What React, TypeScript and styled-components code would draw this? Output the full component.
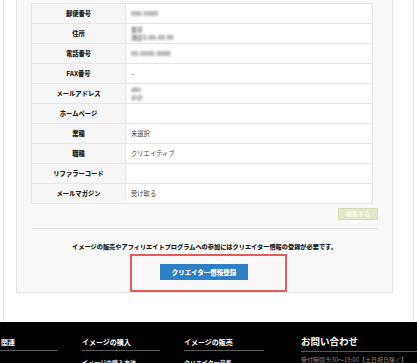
import { FC } from "react";
import styled, { createGlobalStyle } from "styled-components";

const GlobalStyle = createGlobalStyle`
  html, body {
    margin: 0;
    padding: 0;
    background: #fff;
  }
  body {
    font-family: "Noto Sans CJK JP", "Noto Sans", sans-serif;
    color: #333;
  }
`;

type Row = { label: string; value?: string; blur?: string[] };

const rows: Row[] = [
  { label: "郵便番号", blur: ["000-0000"] },
  { label: "住所", blur: ["東京", "港区0-00-00 00"] },
  { label: "電話番号", blur: ["00-0000-0000"] },
  { label: "FAX番号", value: "–" },
  { label: "メールアドレス", blur: ["abc", "@@"] },
  { label: "ホームページ" },
  { label: "業種", value: "未選択" },
  { label: "職種", value: "クリエイティブ" },
  { label: "リファラーコード" },
  { label: "メールマガジン", value: "受け取る" },
];

const App: FC = () => {
  return (
    <Page>
      <GlobalStyle />
      <Frame>
        <Panel>
          <InfoTable>
            <tbody>
              {rows.map((r) => (
                <tr key={r.label}>
                  <LabelCell>{r.label}</LabelCell>
                  <ValueCell>
                    {r.blur ? (
                      <Blurred>
                        {r.blur.map((b, i) => (
                          <span key={i}>{b}</span>
                        ))}
                      </Blurred>
                    ) : (
                      r.value
                    )}
                  </ValueCell>
                </tr>
              ))}
            </tbody>
          </InfoTable>
          <EditRow>
            <EditButton>編集する</EditButton>
          </EditRow>
          <Divider />
          <Notice>
            イメージの販売やアフィリエイトプログラムへの参加にはクリエイター情報の登録が必要です。
          </Notice>
          <ButtonRow>
            <Highlight>
              <RegisterButton>クリエイター情報登録</RegisterButton>
            </Highlight>
          </ButtonRow>
        </Panel>
      </Frame>
      <Footer>
        <FooterCol $width={78}>
          <FooterHead>サイト関連</FooterHead>
        </FooterCol>
        <FooterCol $width={78}>
          <FooterHead>イメージの購入</FooterHead>
          <FooterItem>イメージの購入方法</FooterItem>
        </FooterCol>
        <FooterCol $width={80}>
          <FooterHead>イメージの販売</FooterHead>
          <FooterItem>クリエイター募集</FooterItem>
        </FooterCol>
        <ContactCol>
          <ContactHead>お問い合わせ</ContactHead>
          <ContactItem>受付時間 9:30～19:00【土日祝日除く】</ContactItem>
        </ContactCol>
      </Footer>
    </Page>
  );
};

export default App;

const Page = styled.div`
  width: 417px;
  height: 363px;
  overflow: hidden;
  background: #fff;
`;

const Frame = styled.div`
  margin: 0 3px;
  border-left: 1px solid #e2e2e2;
  border-right: 1px solid #e2e2e2;
  padding: 0 20px 29px 12px;
`;

const Panel = styled.div`
  background: #f9f9f9;
  border: 1px solid #e4e4e4;
  border-top: none;
  padding-top: 3px;
`;

const InfoTable = styled.table`
  border-collapse: collapse;
  margin: 0 18px 0 14px;
  width: 342px;
  background: #fff;
  font-size: 6.3px;
  tr {
    height: 20px;
  }
`;

const LabelCell = styled.td`
  width: 94px;
  padding: 0;
  box-sizing: border-box;
  border: 1px solid #e6e6e6;
  background: #f6f6f6;
  text-align: center;
  font-weight: 900;
  color: #1e1e1e;
  vertical-align: middle;
`;

const ValueCell = styled.td`
  padding: 0 0 0 5px;
  border: 1px solid #e6e6e6;
  color: #444;
  vertical-align: middle;
`;

const Blurred = styled.span`
  display: inline-flex;
  flex-direction: column;
  color: #767676;
  font-size: 6px;
  font-weight: bold;
  filter: blur(1.3px);
  line-height: 8px;
`;

const EditRow = styled.div`
  display: flex;
  justify-content: flex-end;
  padding: 4px 14px 0 0;
`;

const EditButton = styled.button`
  height: 12px;
  width: 40px;
  padding: 0;
  border: 1px solid #d9ddb6;
  background: #e4e8c9;
  color: #f7f8ee;
  font-family: inherit;
  font-size: 6px;
  font-weight: bold;
  line-height: 10px;
`;

const Divider = styled.div`
  height: 1px;
  background: #e6e6e6;
  margin: 8px 14px 0 15px;
`;

const Notice = styled.p`
  margin: 13px 0 0;
  text-align: center;
  font-size: 6.2px;
  line-height: 10px;
  font-weight: 900;
  color: #1e1e1e;
`;

const ButtonRow = styled.div`
  display: flex;
  justify-content: center;
  padding: 2px 0 0 8px;
`;

const Highlight = styled.div`
  border: 2px solid #e15b5f;
  padding: 8px 37px 10px 28px;
`;

const RegisterButton = styled.button`
  display: block;
  width: 88px;
  height: 16px;
  padding: 0;
  border: none;
  background: #2f7fc5;
  color: #fff;
  font-family: inherit;
  font-size: 6.4px;
  font-weight: 900;
  letter-spacing: 0.1px;
`;

const Footer = styled.div`
  display: flex;
  align-items: flex-start;
  gap: 24px;
  background: #000;
  height: 42px;
  padding: 16px 0 0;
  margin-left: -20px;
  box-sizing: border-box;
  width: 460px;
  color: #fff;
`;

const FooterCol = styled.div<{ $width: number }>`
  width: ${(p) => p.$width}px;
  flex: none;
`;

const FooterHead = styled.div`
  font-size: 7px;
  line-height: 9px;
  font-weight: bold;
  padding-bottom: 3px;
  border-bottom: 1px solid #5a5a5a;
  white-space: nowrap;
`;

const FooterItem = styled.div`
  margin-top: 8px;
  font-size: 6px;
  line-height: 8px;
  font-weight: bold;
  color: #e8e8e8;
  white-space: nowrap;
`;

const ContactCol = styled.div`
  flex: 1;
  margin-left: 13px;
  margin-top: -3px;
`;

const ContactHead = styled.div`
  font-size: 9.5px;
  line-height: 13px;
  font-weight: bold;
  padding-bottom: 3px;
  border-bottom: 1px solid #5a5a5a;
  white-space: nowrap;
`;

const ContactItem = styled.div`
  margin-top: 4px;
  font-size: 6px;
  line-height: 8px;
  color: #8c8c8c;
  white-space: nowrap;
`;
